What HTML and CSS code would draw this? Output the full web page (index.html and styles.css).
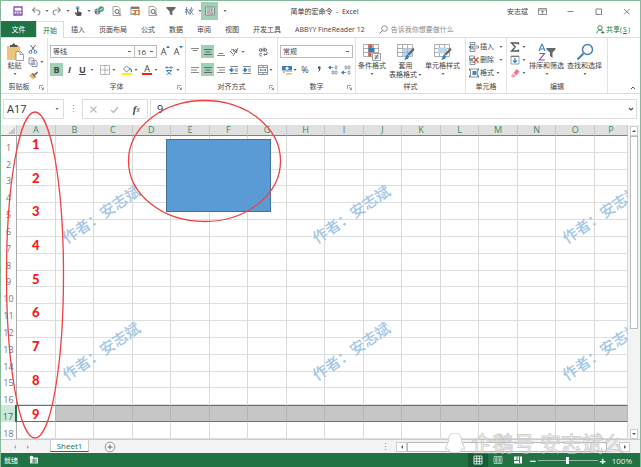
FILE: index.html
```html
<!DOCTYPE html>
<html lang="zh-CN">
<head>
<meta charset="utf-8">
<title>简单的宏命令 - Excel</title>
<link rel="stylesheet" href="styles.css">
</head>
<body>
<svg class="defs" aria-hidden="true">
  <symbol id="caret" viewBox="0 0 4 4"><path d="M0.5 1h3L2 3z" fill="#666"/></symbol>
  <symbol id="launch" viewBox="0 0 5 5"><path d="M.5 4V.5H4M2 2l2.500 2.500M4.500 2.500v2h-2" fill="none" stroke="#888" stroke-width=".8"/></symbol>
  <symbol id="page" viewBox="0 0 10 10"><path d="M1 .5h5l2 2v7H1z" fill="#fff" stroke="#888" stroke-width=".8"/><circle cx="5" cy="5.500" r="2" fill="#fff" stroke="#666"/><path d="M6.500 7l2.500 2.500" stroke="#666"/></symbol>
  <symbol id="funnel" viewBox="0 0 10 10"><path d="M.5 1h9v1.200L6.300 5.500V9.500L3.700 8V5.500L.5 2.200z" fill="#666"/></symbol>
  <symbol id="left" viewBox="0 0 10 10"><path d="M1 2.500h8M1 5h6M1 7.500h8" stroke="#888" fill="none"/></symbol>
  <symbol id="center" viewBox="0 0 10 10"><path d="M1 2.500h8M2.500 5h5M1 7.500h8" stroke="#666" fill="none"/></symbol>
  <symbol id="right" viewBox="0 0 10 10"><path d="M1 2.500h8M3 5h6M1 7.500h8" stroke="#888" fill="none"/></symbol>
  <symbol id="grid" viewBox="0 0 18 18"><path d="M.5 1.500h15v12H.5zM.5 5.500h15M.5 9.500h15M5.500 1.500v12M10.500 1.500v12" fill="#fff" stroke="#999" stroke-width=".8"/></symbol>
  <symbol id="brush" viewBox="0 0 18 18"><path d="M16.500 4.500L10.500 11l1.500 1.500L17.500 7z" fill="#666"/><path d="M10.300 11.500l1.700 1.700c0 2.500-2 3.500-5 3.500 1.800-1.200 1.300-4.500 3.300-5.200z" fill="#2f7fc4"/></symbol>
</svg>

<div class="window">
  <header class="titlebar">
    <div class="quick">
      <button class="q" aria-label="保存"><svg viewBox="0 0 10 10"><path d="M1 1h8v8H1z" fill="#fff" stroke="#8350b0" stroke-width="1.300"/><path d="M1 5.200h8M3 9V7h4v2" stroke="#8350b0" fill="none"/></svg></button>
      <button class="q" aria-label="撤消"><svg viewBox="0 0 10 10"><path d="M4 1.500L1.500 4 4 6.500M2 4h4c4 0 3.500 4.500.5 5" fill="none" stroke="#999" stroke-width="1.200"/></svg></button>
      <svg class="caret"><use href="#caret"/></svg>
      <button class="q" aria-label="恢复"><svg viewBox="0 0 10 10"><path d="M6 1.500L8.500 4 6 6.500M8 4H4C0 4 .5 8.500 3.500 9" fill="none" stroke="#999" stroke-width="1.200"/></svg></button>
      <svg class="caret"><use href="#caret"/></svg>
      <button class="q" aria-label="触摸模式"><svg viewBox="0 0 10 10"><path d="M4 1.500h1.300v4l3 .8c.8.300.3 3.200-.6 3.700H4L1.500 7l.8-.7L4 7z" fill="#555"/><circle cx="4.600" cy="2" r="1.500" fill="none" stroke="#3f86c6" stroke-width=".8"/></svg></button>
      <svg class="caret"><use href="#caret"/></svg>
      <button class="q" aria-label="联机"><svg viewBox="0 0 10 10"><circle cx="3.500" cy="5.500" r="3" fill="#5b7484"/><path d="M1 4.500h5M2 7h4M3.500 2.500v6" stroke="#cfe0e6" stroke-width=".6"/><circle cx="7.200" cy="3" r="2.700" fill="#47a378"/><path d="M6 3l1 1 1.500-2" stroke="#fff" fill="none" stroke-width=".8"/></svg></button>
      <button class="q" aria-label="打印预览"><svg><use href="#page"/></svg></button>
      <button class="q" aria-label="日历"><svg viewBox="0 0 10 10"><path d="M1 1h8v7.500H1z" fill="#fff" stroke="#777" stroke-width=".8"/><path d="M1 2h8" stroke="#666" stroke-width="1.600"/><path d="M5 9.500V4.500h4v5M2.500 4.500h3v3h-3" fill="none" stroke="#e77a2a" stroke-width="1.200"/></svg></button>
      <button class="q" aria-label="预览"><svg><use href="#page"/></svg></button>
      <button class="q" aria-label="筛选"><svg><use href="#funnel"/></svg></button>
      <button class="q" aria-label="对象"><svg viewBox="0 0 10 10"><path d="M2.500 1v8M1 3l3 3M1 7l2-4 2 5 3-6M7.500 1l-1 4 3 4M5.500 9L9.500 3" fill="none" stroke="#6b8296" stroke-width=".8"/><path d="M5 3.500l2 2.500" stroke="#3f86c6"/></svg></button>
      <svg class="caret"><use href="#caret"/></svg>
      <button class="q on" aria-label="编辑表格"><svg viewBox="0 0 10 10"><path d="M.5 1h9v8h-9z" fill="#fff" stroke="#777" stroke-width=".8"/><path d="M.5 3h9M.5 5h9M.5 7h9M3 1v8M5 1v8M7 1v8" stroke="#777" stroke-width=".6"/><path d="M2.500 6h1M6 4h1M6.500 7.500h1" stroke="#d05050"/></svg></button>
      <svg class="caret more"><use href="#caret"/></svg>
    </div>
    <h1>简单的宏命令 &nbsp;- &nbsp;Excel</h1>
    <div class="winctl">
      <span>安志斌</span>
      <button aria-label="功能区选项"><svg viewBox="0 0 9 9"><path d="M.5 1.500h8v6h-8zM.5 3h8M4.500 7V4M3 5.200L4.500 3.800 6 5.200" fill="none" stroke="#777" stroke-width=".8"/></svg></button>
      <button aria-label="最小化"><svg viewBox="0 0 9 9"><path d="M1.500 4.500h6" stroke="#666" stroke-width=".8"/></svg></button>
      <button aria-label="最大化"><svg viewBox="0 0 9 9"><path d="M2 2h5.500v5.500H2z" fill="none" stroke="#666" stroke-width=".8"/></svg></button>
      <button aria-label="关闭"><svg viewBox="0 0 9 9"><path d="M2 2l5.500 5.500M7.500 2L2 7.500" stroke="#666" stroke-width=".8"/></svg></button>
    </div>
  </header>

  <nav class="tabs">
    <button class="file">文件</button>
    <button class="active">开始</button>
    <button>插入</button>
    <button>页面布局</button>
    <button>公式</button>
    <button>数据</button>
    <button>审阅</button>
    <button>视图</button>
    <button>开发工具</button>
    <button>ABBYY FineReader 12</button>
    <label class="tell"><svg viewBox="0 0 9 9"><circle cx="5.500" cy="3.500" r="2.800" fill="none" stroke="#777" stroke-width=".8"/><path d="M3.500 5.500L.5 8.500" stroke="#777"/></svg><input aria-label="操作说明搜索" placeholder="告诉我你想要做什么"></label>
    <button class="share"><svg viewBox="0 0 9 9"><circle cx="4" cy="2.800" r="2.200" fill="none" stroke="#2f8158" stroke-width=".9"/><path d="M.8 8.500C1 6 2 5 4 5s2 .5 2.500 1M5 7.500h3.500M6.800 5.800v3" fill="none" stroke="#2f8158" stroke-width=".9"/></svg>共享(<u>S</u>)</button>
  </nav>

  <section class="ribbon">
    <div class="group clip">
      <div class="body">
        <button class="big"><svg viewBox="0 0 18 18"><path d="M1 3h13v14H1z" fill="#ecc57d"/><path d="M4 4V2h2l1-1.500h1.500L9.500 2h2v2z" fill="#555"/><path d="M10 8.500h4.500l3 3V17.500H10z" fill="#fff" stroke="#888" stroke-width=".8"/><path d="M14 8.500v3h3" fill="none" stroke="#888" stroke-width=".8"/></svg>粘贴<svg class="caret"><use href="#caret"/></svg></button>
        <div class="stack">
          <button aria-label="剪切"><svg viewBox="0 0 10 10"><path d="M2.500 1L7 7M7.500 1L3 7" stroke="#666" fill="none"/><circle cx="2.500" cy="8" r="1.400" fill="none" stroke="#3f86c6"/><circle cx="7.500" cy="8" r="1.400" fill="none" stroke="#3f86c6"/></svg></button>
          <button aria-label="复制"><svg viewBox="0 0 10 10"><path d="M1 1h4l1 1v5H1zM4 3.500h4L9 5v4.500H4z" fill="#fff" stroke="#778" stroke-width=".8"/><path d="M5.500 6h2M5.500 7.500h2M2 3h1.500" stroke="#3f86c6" stroke-width=".7"/></svg><svg class="caret tight"><use href="#caret"/></svg></button>
          <button aria-label="格式刷"><svg viewBox="0 0 10 10"><path d="M9.500 1.500L6 4l1 1.500L9.800 3z" fill="#666"/><path d="M5 3l3 4-2 1-3-4z" fill="#665"/><path d="M4 4L.8 5.500 5 9.500 7 7.500z" fill="#eeb663"/></svg></button>
        </div>
      </div>
      <footer>剪贴板<svg class="launch"><use href="#launch"/></svg></footer>
    </div>

    <div class="group font">
      <div class="body rows">
        <div class="row">
          <select class="family" aria-label="字体"><option>等线</option></select><select class="size" aria-label="字号"><option>16</option></select>
          <button class="i grow" aria-label="增大字号">A<svg class="tip" viewBox="0 0 4 4"><path d="M0 3h4L2 .5z" fill="#2f7fc4"/></svg></button>
          <button class="i grow" aria-label="减小字号">A<svg class="tip" viewBox="0 0 4 4"><path d="M0 1h4L2 3.500z" fill="#2f7fc4"/></svg></button>
        </div>
        <div class="row">
          <button class="i on"><b>B</b></button>
          <button class="i"><b><i>I</i></b></button>
          <button class="i"><b><u>U</u></b></button>
          <svg class="caret wide"><use href="#caret"/></svg>
          <button class="i" aria-label="边框"><svg viewBox="0 0 10 10"><path d="M.5 .5h9v9h-9zM5 .5v9M.5 5h9" fill="none" stroke="#999" stroke-width=".7"/></svg></button>
          <svg class="caret wide"><use href="#caret"/></svg>
          <button class="i" aria-label="填充颜色"><svg viewBox="0 0 10 10"><path d="M4.500 1L1.500 4l3 3L8 4z" fill="#fff" stroke="#777" stroke-width=".9"/><path d="M8 3.500c2 1 1.500 3 1 3.500" stroke="#3f86c6" stroke-width="1.300" fill="none"/><path d="M0 9h10" stroke="#ffef00" stroke-width="2"/></svg></button>
          <svg class="caret wide"><use href="#caret"/></svg>
          <button class="i color" aria-label="字体颜色">A</button>
          <svg class="caret wide"><use href="#caret"/></svg>
          <button class="i" aria-label="拼音"><svg viewBox="0 0 10 10"><path d="M1 2.500h8M3 1v3M7 1v3" stroke="#888" stroke-width=".9"/><path d="M2 5.500h6M5 4.500v1M3 6c1 2 3 3 4.500 3.500M7 6C6 8 4 9 2.500 9.500" fill="none" stroke="#3f86c6"/></svg></button>
          <svg class="caret wide"><use href="#caret"/></svg>
        </div>
      </div>
      <footer>字体<svg class="launch"><use href="#launch"/></svg></footer>
    </div>

    <div class="group align">
      <div class="body rows">
        <div class="row">
          <button class="i" aria-label="顶端对齐"><svg viewBox="0 0 10 10"><path d="M1 1.500h8M2.500 3.500h5" stroke="#888"/></svg></button>
          <button class="i on" aria-label="垂直居中"><svg><use href="#center"/></svg></button>
          <button class="i" aria-label="底端对齐"><svg viewBox="0 0 10 10"><path d="M2.500 6.500h5M1 8.500h8" stroke="#888"/></svg></button>
          <button class="i" aria-label="方向"><svg viewBox="0 0 10 10"><path d="M1 4l3 3M2 3c2-1 3 0 3 2M4 2l4 4M9 1L4 9M6 3c2-1 3 1 1 2" fill="none" stroke="#666" stroke-width=".9"/></svg></button>
          <svg class="caret wide"><use href="#caret"/></svg>
          <button class="i wrap" aria-label="自动换行"><svg viewBox="0 0 10 10"><circle cx="2.500" cy="3" r="1.300" fill="none" stroke="#555" stroke-width=".9"/><path d="M4 1.500v3M6 .5v4M4 6.500c-3-1-3 3 0 2.500M9 5v2.500H6" fill="none" stroke="#555" stroke-width=".9"/><circle cx="7.300" cy="3" r="1.300" fill="none" stroke="#555" stroke-width=".9"/><path d="M5 7.500L7 6v3z" fill="#3f86c6"/></svg></button>
        </div>
        <div class="row">
          <button class="i" aria-label="左对齐"><svg><use href="#left"/></svg></button>
          <button class="i on" aria-label="居中"><svg><use href="#center"/></svg></button>
          <button class="i" aria-label="右对齐"><svg><use href="#right"/></svg></button>
          <button class="i" aria-label="减少缩进"><svg viewBox="0 0 10 10"><path d="M1 1.500h8M6 4h3M6 6h3M1 8.500h8" stroke="#777" stroke-width=".9"/><path d="M.5 5L3 3v4zM3 5h2.500" fill="#2f7fc4" stroke="#2f7fc4"/></svg></button>
          <button class="i" aria-label="增加缩进"><svg viewBox="0 0 10 10"><path d="M1 1.500h8M6 4h3M6 6h3M1 8.500h8" stroke="#777" stroke-width=".9"/><path d="M5 5L2.500 3v4zM.5 5h2.500" fill="#2f7fc4" stroke="#2f7fc4"/></svg></button>
          <button class="i merge" aria-label="合并"><svg viewBox="0 0 10 10"><path d="M.5 .5h9v9h-9zM.5 2.500h9M.5 7.500h9M5 .5v2M5 7.500v2" fill="#fff" stroke="#777" stroke-width=".8"/><path d="M2 5h6M3 4L2 5l1 1M7 4l1 1-1 1" stroke="#2f7fc4" fill="none" stroke-width=".9"/></svg></button>
          <svg class="caret"><use href="#caret"/></svg>
        </div>
      </div>
      <footer>对齐方式<svg class="launch"><use href="#launch"/></svg></footer>
    </div>

    <div class="group number">
      <div class="body rows">
        <div class="row"><select class="format" aria-label="数字格式"><option>常规</option></select></div>
        <div class="row">
          <button class="i" aria-label="会计格式"><svg viewBox="0 0 10 10"><path d="M0 1h10v4.500H0z" fill="#3f7fb8"/><circle cx="5" cy="3.200" r="1.500" fill="#fff"/><path d="M4 6h6v1H4zM4 8h6v1.500H4zM1 6h2v2H1z" fill="#edb96c"/></svg></button>
          <svg class="caret"><use href="#caret"/></svg>
          <button class="i pct">%</button>
          <button class="i" aria-label="千位分隔"><svg viewBox="0 0 10 10"><path d="M3 2.500a1.300 1.300 0 1 1 2.500.5C5.500 5.500 4.500 6.500 3 7c1-1 1-2 1-2.700C3.300 4 3 3.500 3 2.500z" fill="#555"/></svg></button>
          <button class="i" aria-label="增加小数"><svg viewBox="0 0 10 10"><path d="M.5 2.500L2.500 1v3zM2 2.500h3" fill="#2f7fc4" stroke="#2f7fc4" stroke-width=".8"/><g fill="none" stroke="#777" stroke-width=".8"><ellipse cx="8" cy="2.500" rx="1" ry="1.700"/><ellipse cx="5" cy="7.500" rx="1" ry="1.700"/><ellipse cx="8" cy="7.500" rx="1" ry="1.700"/></g></svg></button>
          <button class="i" aria-label="减少小数"><svg viewBox="0 0 10 10"><path d="M.5 7.500L2.500 6v3zM2 7.500h3" fill="#2f7fc4" stroke="#2f7fc4" stroke-width=".8"/><g fill="none" stroke="#777" stroke-width=".8"><ellipse cx="8" cy="7.500" rx="1" ry="1.700"/><ellipse cx="5" cy="2.500" rx="1" ry="1.700"/><ellipse cx="8" cy="2.500" rx="1" ry="1.700"/></g></svg></button>
        </div>
      </div>
      <footer>数字<svg class="launch"><use href="#launch"/></svg></footer>
    </div>

    <div class="group style">
      <div class="body">
        <button class="big"><svg viewBox="0 0 18 18"><use href="#grid"/><path d="M5.500 1.500h4v3.500h-4zM5.500 9.500h3v4h-3z" fill="#dc5b3c"/><path d="M5.500 5h6v4h-6z" fill="#3579b8"/><path d="M9.500 10.500h8v7h-8z" fill="#fff" stroke="#888" stroke-width=".8"/><path d="M11.500 13h4M11.500 15h4M15 11.500l-3 5" stroke="#555" stroke-width=".8"/></svg>条件格式<svg class="caret"><use href="#caret"/></svg></button>
        <button class="big"><svg viewBox="0 0 18 18"><use href="#grid"/><path d="M5.500 5.500h10v8h-10z" fill="#bcd5ea"/><path d="M5.500 9.500h10M10.500 5.500v8" stroke="#8fb5d5" stroke-width=".8"/><use href="#brush"/></svg>套用<span>表格格式<svg class="caret"><use href="#caret"/></svg></span></button>
        <button class="big"><svg viewBox="0 0 18 18"><use href="#grid"/><path d="M4 4.500h9v6H4z" fill="#bcd5ea"/><use href="#brush"/></svg>单元格样式<svg class="caret"><use href="#caret"/></svg></button>
      </div>
      <footer>样式</footer>
    </div>

    <div class="group cells">
      <div class="body">
        <div class="stack">
          <button><svg viewBox="0 0 10 10"><path d="M1 .5h5v2H1zM1 7h5v2.500H1zM3.500 4h6v2h-6z" fill="#fff" stroke="#777" stroke-width=".8"/><path d="M0 5l2-1.500v3z" fill="#2f7fc4" stroke="#2f7fc4"/></svg>插入<svg class="caret"><use href="#caret"/></svg></button>
          <button><svg viewBox="0 0 10 10"><path d="M.5 1h5v2.500h-5zM1 7h5v2.500H1z" fill="#fff" stroke="#777" stroke-width=".8"/><path d="M0 5h4" stroke="#2f7fc4" stroke-width="1.500"/><path d="M4.500 2.500l5 5M9.500 2.500l-5 5" stroke="#e0492b" stroke-width="1.400"/></svg>删除<svg class="caret"><use href="#caret"/></svg></button>
          <button><svg viewBox="0 0 10 10"><path d="M1.500 1h7v8h-7z" fill="#fff" stroke="#777" stroke-width=".8"/><path d="M3.500 3h4v4h-4z" fill="#3f86c6"/><path d="M.5 .5v2M.5 7.500v2M9.500 .5v2M9.500 7.500v2" stroke="#2f7fc4"/></svg>格式<svg class="caret tight"><use href="#caret"/></svg></button>
        </div>
      </div>
      <footer>单元格</footer>
    </div>

    <div class="group edit">
      <div class="body">
        <div class="stack">
          <button aria-label="求和"><svg viewBox="0 0 10 10"><path d="M8.500 2.500V1H1.500L5.300 5 1.500 9h7V7.500" fill="none" stroke="#555" stroke-width="1.300"/></svg><svg class="caret tight"><use href="#caret"/></svg></button>
          <button aria-label="填充"><svg viewBox="0 0 10 10"><path d="M1 1h8v8H1z" fill="#fff" stroke="#888" stroke-width=".8"/><path d="M1 1.500h8" stroke="#777"/><path d="M5 3v4M3 5.500l2 2 2-2" fill="none" stroke="#2f7fc4" stroke-width="1.200"/></svg><svg class="caret tight"><use href="#caret"/></svg></button>
          <button aria-label="清除"><svg viewBox="0 0 10 10"><path d="M6.500 1L9.500 3.500 6.500 7.500 3.500 5z" fill="#e8798b"/><path d="M3 5.500L6 8 4.500 9.500H2.500L.8 8z" fill="#f1a7b2"/></svg><svg class="caret tight"><use href="#caret"/></svg></button>
        </div>
        <button class="big"><svg viewBox="0 0 18 18"><path d="M1 8L3.700 1.500h.6L7 8M2 6h4" fill="none" stroke="#3f86c6" stroke-width="1.200"/><path d="M1.500 10.500h5L1.500 17h5.300" fill="none" stroke="#9050b0" stroke-width="1.200"/><path d="M8.500 5h9v1.500l-3 3V15L12 13V9.500l-3.500-3z" fill="#666"/></svg>排序和筛选<svg class="caret"><use href="#caret"/></svg></button>
        <button class="big"><svg viewBox="0 0 18 18"><circle cx="11.500" cy="6.500" r="5" fill="#fff" stroke="#3f7fc0" stroke-width="1.500"/><path d="M7.500 10.500L1.500 16.500" stroke="#3f7fc0" stroke-width="2"/></svg>查找和选择<svg class="caret"><use href="#caret"/></svg></button>
      </div>
      <footer>编辑</footer>
    </div>
    <button class="collapse" aria-label="折叠功能区"><svg viewBox="0 0 6 6"><path d="M1 4l2-2 2 2" fill="none" stroke="#555"/></svg></button>
  </section>

  <section class="formula">
    <label class="name"><input aria-label="名称框" value="A17"><svg class="caret"><use href="#caret"/></svg></label>
    <span class="dots">⋮</span>
    <div class="fx">
      <button aria-label="取消"><svg viewBox="0 0 9 9"><path d="M1.500 1.500l6 6M7.500 1.500l-6 6" stroke="#bbb" stroke-width="1.100"/></svg></button>
      <button aria-label="输入"><svg viewBox="0 0 9 9"><path d="M1 5l2.500 2.500L8 2" fill="none" stroke="#bbb" stroke-width="1.300"/></svg></button>
      <button class="fn"><i>f</i><small>x</small></button>
    </div>
    <label class="entry"><input aria-label="编辑栏" value="9"><svg viewBox="0 0 6 6"><path d="M1 2l2 2 2-2" fill="none" stroke="#555" stroke-width="1.200"/></svg></label>
  </section>

  <main class="work">
    <div class="sheet">
      <table>
        <colgroup><col class="rh"><col span="15"><col class="last"></colgroup>
        <thead><tr><th><svg viewBox="0 0 10 10"><path d="M9 1v8H1z" fill="#c4c4c4"/></svg></th><th>A</th><th>B</th><th>C</th><th>D</th><th>E</th><th>F</th><th>G</th><th>H</th><th>I</th><th>J</th><th>K</th><th>L</th><th>M</th><th>N</th><th>O</th><th>P</th></tr></thead>
        <tbody id="rows"></tbody>
      </table>
      <div class="shape"></div>
      <span class="mark m1">作者：安志斌</span>
      <span class="mark m2">作者：安志斌</span>
      <span class="mark m3">作者：安志斌</span>
      <span class="mark m4">作者：安志斌</span>
      <span class="mark m5">作者：安志斌</span>
      <span class="mark m6">作者：安志斌</span>
    </div>
    <div class="vscroll">
      <button aria-label="向上"><svg viewBox="0 0 6 6"><path d="M1 4h4L3 2z" fill="#555"/></svg></button>
      <div class="thumb"></div>
      <button aria-label="向下"><svg viewBox="0 0 6 6"><path d="M1 2h4L3 4z" fill="#555"/></svg></button>
    </div>
  </main>

  <div class="sheetbar">
    <button class="nav" aria-label="上一张"><svg viewBox="0 0 6 6"><path d="M4 1v4L2 3z" fill="#aaa"/></svg></button>
    <button class="nav" aria-label="下一张"><svg viewBox="0 0 6 6"><path d="M2 1v4l2-2z" fill="#aaa"/></svg></button>
    <button class="tab">Sheet1</button>
    <button class="add" aria-label="新工作表"><svg viewBox="0 0 12 12"><circle cx="6" cy="6" r="4.800" fill="#fff" stroke="#777" stroke-width=".8"/><path d="M6 3.500v5M3.500 6h5" stroke="#666"/></svg></button>
    <span class="dots">⋮</span>
    <div class="hscroll">
      <button aria-label="向左"><svg viewBox="0 0 6 6"><path d="M4 1v4L2 3z" fill="#555"/></svg></button>
      <div class="thumb"></div>
      <button aria-label="向右"><svg viewBox="0 0 6 6"><path d="M2 1v4l2-2z" fill="#555"/></svg></button>
    </div>
  </div>

  <footer class="status">
    <span>就绪</span>
    <svg class="macro" viewBox="0 0 10 10"><path d="M1 2.500h8v6H1z" fill="#d8ebe0"/><circle cx="2.500" cy="2.500" r="1.800" fill="#fff"/><path d="M3 5h5M3 7h5M5 3.500v5" stroke="#217346" stroke-width=".7"/></svg>
    <button class="view on" aria-label="普通"><svg viewBox="0 0 10 10"><path d="M1 1h8v8H1zM1 3.700h8M1 6.300h8M3.700 1v8M6.300 1v8" fill="none" stroke="#fff" stroke-width=".8"/></svg></button>
    <button class="view" aria-label="页面布局"><svg viewBox="0 0 10 10"><path d="M1 1.500h8v7H1zM3 3h4v4H3zM3 1.500v7M7 1.500v7M3 5h4" fill="none" stroke="#b6d6c5" stroke-width=".8"/></svg></button>
    <button class="view" aria-label="分页预览"><svg viewBox="0 0 10 10"><path d="M1 1.500h8v7H1z" fill="#fff"/><path d="M4 1.500v4h2.500v-4M1 5.500h3M6.500 5.500V8" fill="none" stroke="#217346" stroke-width=".9"/></svg></button>
    <div class="zoom">
      <button aria-label="缩小">−</button>
      <input type="range" aria-label="显示比例" value="50">
      <button aria-label="放大">+</button>
      <span>100%</span>
    </div>
  </footer>

  <svg class="rings" aria-hidden="true" width="300" height="450" viewBox="0 0 300 450">
    <ellipse cx="204.500" cy="161" rx="76" ry="60.500"/>
    <ellipse cx="35" cy="275" rx="28.500" ry="163"/>
  </svg>
  <div class="brand"><svg viewBox="0 0 20 20"><path d="M10 0C4.500 0 3.500 4 3.500 8L0 16h3c1 3 4 4 7 4s6-1 7-4h3l-3.500-8c0-4-1-8-6.500-8z"/></svg><span>企鹅号 安志斌么</span></div>
</div>
<script src="script.js"></script>
</body>
</html>
```
FILE: styles.css
```css
* { box-sizing: border-box; }
html, body { height: 100%; margin: 0; }
body, button, input, select {
  font-family: "Open Sans", "Noto Sans CJK SC", sans-serif;
  font-size: 7px;
  line-height: 9px;
  color: #444;
}
button { margin: 0; padding: 0; border: 0; background: none; display: flex; align-items: center; justify-content: center; white-space: nowrap; }
input, select { margin: 0; border: 0; padding: 0; background: none; outline: 0; min-width: 0; }
svg { display: block; flex: none; }
.defs { position: absolute; width: 0; height: 0; }
.caret { width: 4px; height: 4px; }

.window { position: relative; min-height: 100vh; display: flex; flex-direction: column; border: 1px solid #86b99c; border-bottom: 0; background: #fff; overflow: hidden; }

.titlebar { display: flex; align-items: center; height: 20px; }
.quick { flex: 1; display: flex; align-items: center; padding-left: 8px; }
.q { width: 18px; height: 18px; }
.q svg { width: 10px; height: 10px; }
.q.on { background: #a0d0b6; width: 17px; }
.quick .caret { margin-right: -1px; }
.quick .more { margin-left: 5px; }
.titlebar h1 { margin: 0; font-size: 7px; font-weight: 400; color: #333; white-space: nowrap; }
.winctl { flex: 1; display: flex; align-items: center; justify-content: flex-end; }
.winctl button { width: 28px; height: 20px; }
.winctl svg { width: 9px; height: 9px; }

.tabs { display: flex; height: 17px; border-bottom: 1px solid #ddd; }
.tabs button { padding: 0 7px; }
.tabs .file { width: 35px; background: #217346; color: #fff; }
.tabs .active { padding: 0 6px; margin-bottom: -1px; background: #fff; border: 1px solid #ddd; border-bottom: 0; width: 28px; color: #217346; }
.tell { display: flex; align-items: center; gap: 3px; margin-left: 7px; flex: 1; }
.tell svg { width: 9px; height: 9px; }
.tell input { flex: 1; }
.tell input::placeholder { color: #888; opacity: 1; }
.tabs .share { padding: 0 10px 0 0; color: #217346; gap: 1px; }
.share svg { width: 9px; height: 9px; }

.ribbon { display: flex; height: 56px; border-bottom: 1px solid #ddd; }
.group { display: flex; flex-direction: column; flex: none; border-right: 1px solid #e2e2e2; }
.group .body { flex: 1; display: flex; padding-top: 4px; }
.group footer { position: relative; height: 10px; margin-bottom: 1px; text-align: center; }
.launch { position: absolute; right: 3px; bottom: 2px; width: 5px; height: 5px; }
.clip { width: 47px; }
.clip footer { padding-right: 10px; }
.font { width: 138px; }
.align { width: 92px; }
.number { width: 78px; }
.style { width: 110px; }
.cells { width: 41px; }
.edit { width: 101px; }
.collapse { margin: auto 4px 2px auto; }
.collapse svg { width: 6px; height: 6px; }

.big { flex-direction: column; justify-content: flex-start; padding-top: 1px; }
.big > svg:first-child { width: 18px; height: 18px; }
.big > .caret { margin-top: 2px; }
.big span { display: flex; align-items: center; gap: 1px; }
.clip .big { width: 27px; }
.style .body { gap: 3px; padding-left: 2px; }
.edit .body { gap: 3px; }

.stack { display: flex; flex-direction: column; }
.stack button { height: 13px; gap: 1px; justify-content: flex-start; }
.stack button > svg:first-child { width: 10px; height: 10px; }
.stack .caret { margin-left: 4px; }
.stack .tight { margin-left: 1px; }
.cells .stack, .edit .stack { margin-top: -2px; padding-left: 3px; }

.rows { flex-direction: column; gap: 5px; padding-left: 2px; }
.row { display: flex; align-items: center; height: 13px; }
.group .rows { padding-top: 7px; }
select { appearance: none; height: 13px; border: 1px solid #bbb; border-radius: 0; padding: 0 2px; background: linear-gradient(#666, #666) no-repeat right 3px center / 3px 1px; }
.family { width: 85px; }
.size { width: 22px; border-left: 0; font-size: 8px; margin-right: 2px; }
.format { width: 73px; }
.i { width: 13px; height: 13px; font-size: 9px; flex: none; }
.i svg { width: 10px; height: 10px; }
.i.on { background: #a0d0b6; }
.i .tip { width: 4px; height: 4px; align-self: flex-start; }
.caret.wide { margin: 0 4px 0 1px; }
.color { height: 11px; width: 10px; border-bottom: 2px solid #f02020; margin-right: 1px; }
.wrap { margin-left: 7px; }
.merge { margin-left: 3px; }
.pct { width: 16px; }

.formula { display: flex; align-items: stretch; height: 20px; margin: 5px 3px 6px 2px; }
.formula input { font-size: 11px; line-height: 14px; color: #333; }
.name { display: flex; align-items: center; width: 61px; border: 1px solid #ddd; padding: 0 4px 0 3px; }
.name input { flex: 1; }
.dots { color: #888; font-size: 9px; line-height: 12px; }
.formula .dots { width: 18px; text-align: center; line-height: 20px; }
.fx { display: flex; width: 66px; border: 1px solid #ddd; }
.fx button { flex: 1; }
.fx svg { width: 9px; height: 9px; }
.fn i { font-family: "Liberation Serif", serif; font-size: 11px; font-weight: 700; }
.fn small { font-size: 7px; font-style: italic; }
.entry { flex: 1; display: flex; align-items: center; margin-left: 2px; border: 1px solid #ddd; padding: 0 2px 0 6px; }
.entry input { flex: 1; }
.entry svg { width: 6px; height: 6px; }

.work { flex: 1; display: flex; background: #f3f3f3; }
.sheet { position: relative; flex: 1; display: grid; overflow: hidden; background: #fff; }
table { width: 100%; height: 100%; table-layout: fixed; border-collapse: separate; border-spacing: 0; }
.rh { width: 16px; }
.last { width: 33px; }
th, td { padding: 0; font-size: 9px; line-height: 10px; }
thead th { height: 11px; background: #e0e0e0; color: #3f8a64; font-weight: 400; border-bottom: 1px solid #4a9a70; border-right: 1px solid #c8c8c8; }
thead th:first-child { background: #f0f0f0; }
thead svg { width: 9px; height: 9px; margin-left: auto; }
tbody tr { height: 16px; }
tbody th { font-weight: 400; color: #777; vertical-align: bottom; border-right: 1px solid #aaa; background: #fff; }
td { border-right: 1px solid #d9d9d9; border-bottom: 1px solid #dedede; }
.val { font-family: Lato, sans-serif; font-weight: 900; font-size: 13px; text-align: center; vertical-align: middle; color: #f81818; }
.picked th { background: #cfe8da; color: #217346; border-right: 2px solid #217346; }
.picked td { background: #c6c6c6; border-right-color: #b4b4b4; border-top: 1px solid #3b8a60; border-bottom: 1px solid #3b8a60; }
.picked .val { background: #fff; }

.shape { position: absolute; left: 165px; top: 14px; width: 105px; height: 73px; background: #5b9bd5; border: 1px solid #41719c; }
.mark { position: absolute; width: 90px; margin-left: -45px; font-family: "Noto Sans CJK TC", sans-serif; font-size: 15px; line-height: 20px; font-weight: 500; color: #a3c6e6; white-space: nowrap; transform: rotate(-34deg); }
.m1, .m2, .m3 { top: 79px; }
.m4, .m5, .m6 { top: 216px; }
.m1, .m4 { left: 100px; }
.m2, .m5 { left: 350px; }
.m3, .m6 { left: 600px; }

.vscroll { display: flex; flex-direction: column; width: 12px; padding: 1px 2px 0; }
.vscroll button { height: 10px; flex: none; background: #fff; border: 1px solid #ccc; }
.vscroll svg, .hscroll svg, .nav svg { width: 6px; height: 6px; }
.vscroll .thumb { height: 193px; background: #fff; border: 1px solid #bbb; margin-bottom: auto; }

.sheetbar { display: flex; align-items: center; height: 14px; background: #f3f3f3; border-top: 1px solid #ccc; padding-left: 7px; }
.nav { width: 13px; }
.sheetbar .tab { align-self: flex-start; width: 39px; height: 12px; margin-left: 16px; background: #fff; border: solid #ccc; border-width: 0 1px; border-bottom: 1px solid #217346; font-size: 8px; color: #217346; }
.add { margin-left: 15px; }
.add svg { width: 12px; height: 12px; }
.sheetbar > .dots { margin-left: auto; }
.hscroll { display: flex; width: 37%; height: 10px; margin: 0 10px 0 6px; }
.hscroll button { width: 11px; flex: none; background: #fff; border: 1px solid #ccc; }
.hscroll .thumb { flex: 1; background: #fff; border: 1px solid #bbb; margin-right: 12px; }

.status { display: flex; align-items: center; height: 14px; margin: 0 -1px; padding-left: 4px; background: #217346; color: #fff; }
.macro { width: 10px; height: 10px; margin: 0 auto 0 11px; }
.view { width: 20px; height: 14px; }
.view.on { background: #185c37; }
.view svg { width: 10px; height: 10px; }
.zoom { display: flex; align-items: center; padding-right: 9px; }
.zoom button { width: 10px; color: #fff; font-size: 11px; font-weight: 700; }
.zoom span { margin-left: 4px; font-size: 8px; color: #e2f0e8; }
input[type="range"] { appearance: none; width: 60px; height: 10px; background: linear-gradient(#8dbba2, #8dbba2) no-repeat center / 100% 1px; }
input[type="range"]::-webkit-slider-thumb { appearance: none; width: 3px; height: 7px; background: #fff; }

.rings { position: absolute; left: -1px; top: -1px; pointer-events: none; }
.rings ellipse { fill: none; stroke: #f04040; stroke-width: 1.3; }
.brand { position: absolute; right: 16px; bottom: 14px; display: flex; align-items: center; gap: 7px; pointer-events: none; font-size: 21px; line-height: 20px; color: #ffffff99; -webkit-text-stroke: 1px #aaaaaa88; white-space: nowrap; }
.brand svg { width: 20px; height: 20px; fill: #fff; stroke: #ccc; }
```
FILE: script.js
```js
// Build rows 1-18; odd rows carry the values 1-9 in column A.
const body = document.getElementById("rows");
for (let r = 1; r <= 18; r++) {
  const tr = document.createElement("tr");
  if (r === 17) tr.className = "picked";
  const th = document.createElement("th");
  th.textContent = r;
  tr.append(th);
  for (let c = 0; c < 16; c++) {
    const td = document.createElement("td");
    if (c === 0 && r % 2) {
      td.className = "val";
      td.textContent = (r + 1) / 2;
    }
    tr.append(td);
  }
  body.append(tr);
}
```
